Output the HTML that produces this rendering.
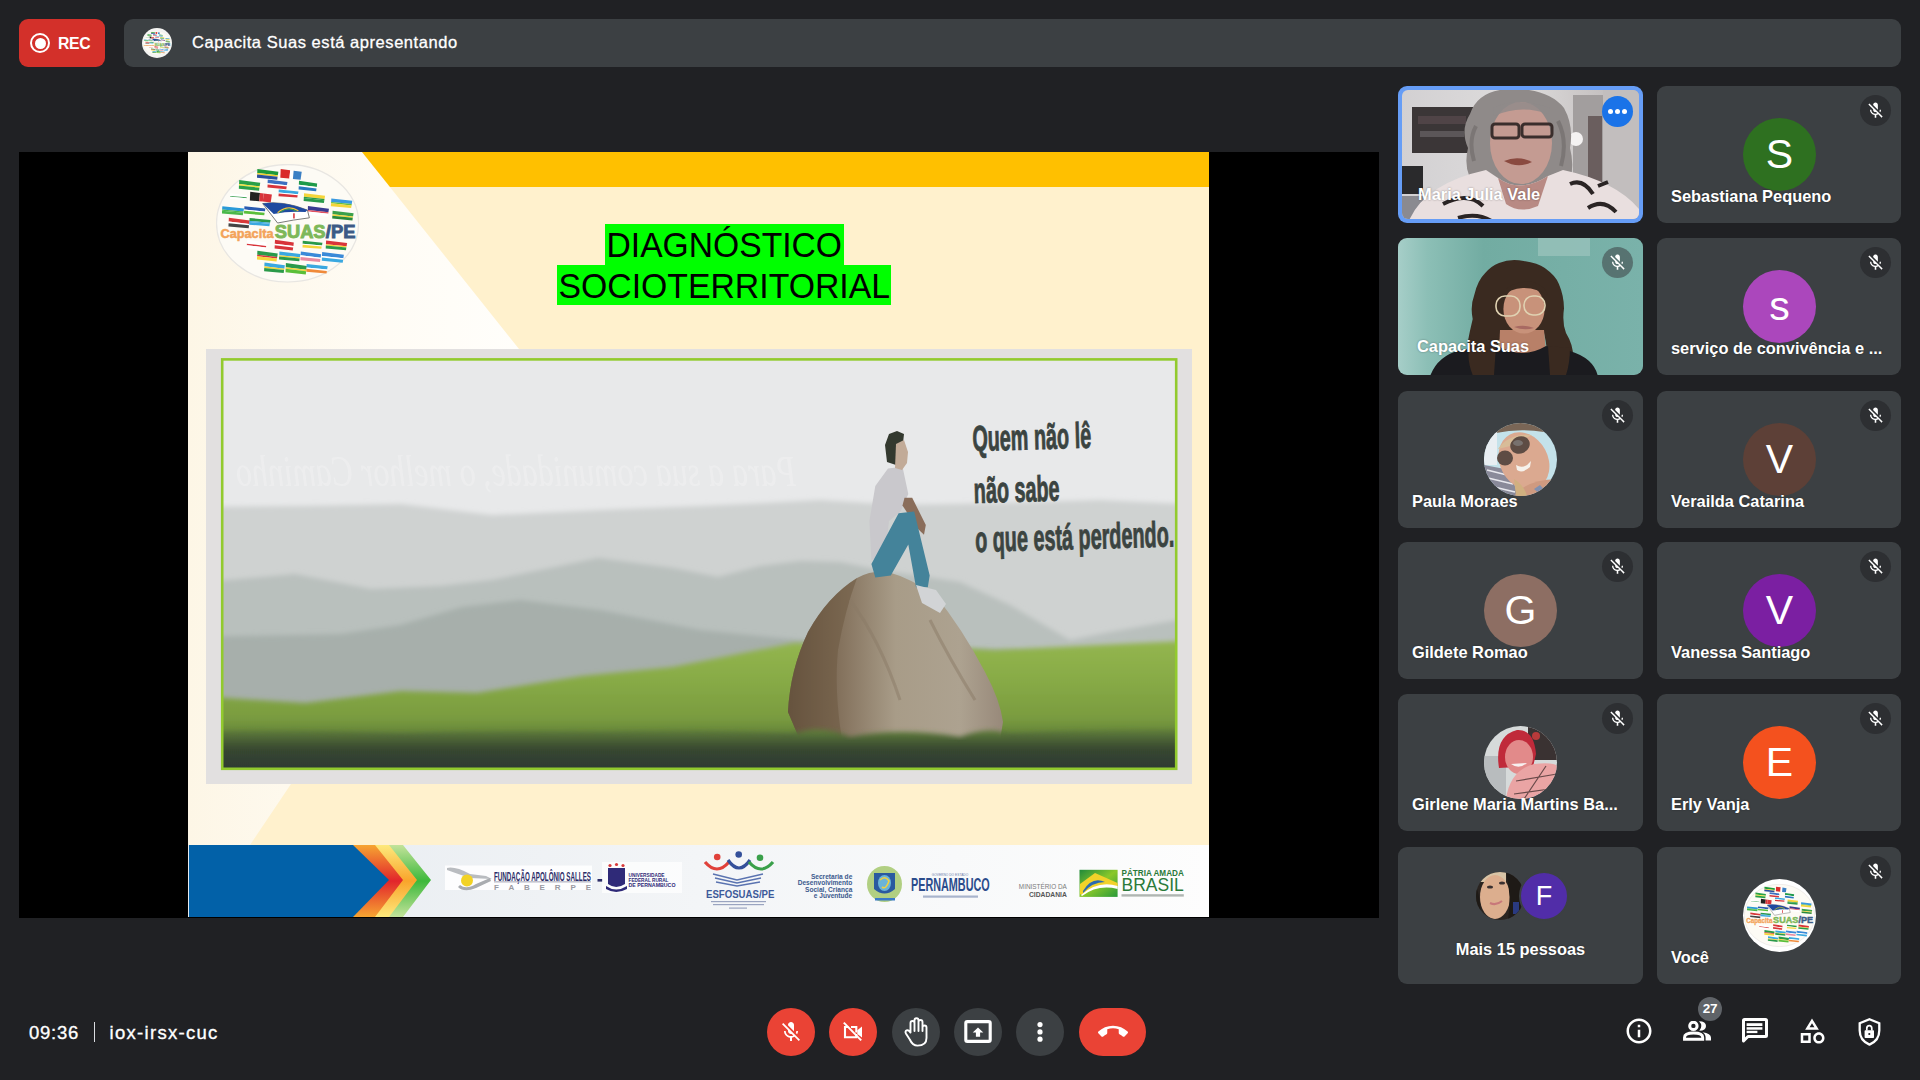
<!DOCTYPE html>
<html><head><meta charset="utf-8">
<style>
*{box-sizing:border-box;margin:0;padding:0}
html,body{width:1920px;height:1080px;overflow:hidden;background:#202124;font-family:"Liberation Sans",sans-serif;color:#fff}
.abs{position:absolute}
#rec{left:19px;top:19px;width:86px;height:48px;background:#d3302a;border-radius:9px}
#rec .ring{left:11px;top:14px;width:20px;height:20px;border:2.2px solid #fff;border-radius:50%}
#rec .dot{left:15.5px;top:18.5px;width:11px;height:11px;background:#fff;border-radius:50%}
#rec .t{left:39px;top:15.5px;font-weight:bold;font-size:15.8px;letter-spacing:-0.3px}
#bar{left:124px;top:19px;width:1777px;height:48px;background:#3c4043;border-radius:9px}
#bar .logo{left:18px;top:9px;width:30px;height:30px;border-radius:50%;background:#f4f4f2;overflow:hidden}
#bar .t{left:68px;top:14px;font-size:16.5px;letter-spacing:0.55px;color:#fff;-webkit-text-stroke:0.3px #fff}
#stage{left:19px;top:152px;width:1360px;height:766px;background:#000}
#slide{left:188px;top:152px;width:1021px;height:765px;background:#fff1cf;overflow:hidden}
.tile{position:absolute;width:245px;height:137px;background:#3c4043;border-radius:9px;overflow:hidden}
.c2{left:1657px;width:244px}
.c1{left:1398px}
.name{position:absolute;left:14px;top:100.5px;font-weight:bold;font-size:16.4px;white-space:nowrap;text-shadow:0 0 2px rgba(0,0,0,.4)}
.av{position:absolute;left:86px;top:32px;width:73px;height:73px;border-radius:50%;text-align:center;line-height:73px;font-size:41px;color:#fff;overflow:hidden}
.mute{position:absolute;right:10px;top:9px;width:31px;height:31px;border-radius:50%;background:rgba(32,33,36,.55)}
.mute svg{position:absolute;left:6px;top:6px;width:19px;height:19px}
.btn{position:absolute;top:1008px;width:48px;height:48px;border-radius:50%;background:#3c4043}
.btn.red{background:#ea4335}
.btn svg{position:absolute;left:12px;top:12px;width:24px;height:24px}
.ricon{position:absolute;top:1018px;width:24px;height:24px}
.dots{position:absolute;left:204px;top:10px;width:31px;height:31px;border-radius:50%;background:#1a73e8}
.dots i{position:absolute;top:13px;width:5.4px;height:5.4px;border-radius:50%;background:#fff}
.dots i:nth-child(1){left:5.5px}.dots i:nth-child(2){left:12.8px}.dots i:nth-child(3){left:20px}
</style></head><body>
<svg width="0" height="0" style="position:absolute"><defs><symbol id="logoSym" viewBox="85 70 1105 915" preserveAspectRatio="none"><ellipse cx="637" cy="527" rx="548" ry="453" fill="#fdfbf5" stroke="#e8e6e2" stroke-width="10"/><polygon points="404,109 566,130 562,157 403,139" fill="#1e9a3a"/>
<polygon points="403,139 562,157 560,168 402,151" fill="#f2d02a"/>
<polygon points="402,151 560,168 557,191 401,176" fill="#2c4f9c"/>
<polygon points="584,109 657,119 651,182 581,176" fill="#d92b2b"/>
<polygon points="657,119 684,122 678,185 651,182" fill="#ffffff"/>
<polygon points="684,122 746,130 737,191 678,185" fill="#3b7fc4"/>
<polygon points="264,194 426,215 422,242 263,224" fill="#2aa048"/>
<polygon points="263,224 422,242 420,253 262,236" fill="#f5e23a"/>
<polygon points="262,236 420,253 417,276 261,261" fill="#2aa048"/>
<polygon points="484,190 636,209 632,234 483,218" fill="#3c6fc0"/>
<polygon points="483,218 632,234 630,244 483,228" fill="#ffffff"/>
<polygon points="483,228 630,244 627,265 482,251" fill="#d8343a"/>
<polygon points="725,199 865,220 862,247 724,229" fill="#1f9a4a"/>
<polygon points="724,229 862,247 860,258 723,241" fill="#ffffff"/>
<polygon points="723,241 860,258 857,281 722,266" fill="#2a78c0"/>
<polygon points="195,296 325,310 322,327 194,316" fill="#ffffff"/>
<polygon points="194,316 322,327 320,334 194,323" fill="#3aa052"/>
<polygon points="194,323 320,334 318,349 193,339" fill="#ffffff"/>
<polygon points="349,284 424,294 418,357 346,351" fill="#222222"/>
<polygon points="424,294 453,297 446,360 418,357" fill="#d8343a"/>
<polygon points="453,297 516,305 507,366 446,360" fill="#d8343a"/>
<polygon points="569,266 721,282 717,303 568,289" fill="#3aa8e0"/>
<polygon points="568,289 717,303 715,311 568,298" fill="#ffffff"/>
<polygon points="568,298 715,311 712,329 567,318" fill="#d8343a"/>
<polygon points="764,295 926,314 922,339 763,323" fill="#f5d53a"/>
<polygon points="763,323 922,339 920,349 762,333" fill="#2a9a4a"/>
<polygon points="762,333 920,349 917,370 761,356" fill="#2a9a4a"/>
<polygon points="974,335 1136,354 1132,379 973,363" fill="#3a9ae0"/>
<polygon points="973,363 1132,379 1130,389 972,373" fill="#6abf3a"/>
<polygon points="972,373 1130,389 1127,410 971,396" fill="#f5d53a"/>
<polygon points="134,395 301,413 297,436 132,421" fill="#2a9ad8"/>
<polygon points="132,421 297,436 295,445 132,430" fill="#4ab84a"/>
<polygon points="132,430 295,445 292,465 131,452" fill="#4ab84a"/>
<polygon points="304,395 466,413 462,436 303,421" fill="#2a5ab0"/>
<polygon points="303,421 462,436 460,445 302,430" fill="#ffffff"/>
<polygon points="302,430 460,445 457,465 301,452" fill="#5abf3a"/>
<polygon points="794,394 956,415 952,442 793,424" fill="#3a3a90"/>
<polygon points="793,424 952,442 950,453 792,436" fill="#e05060"/>
<polygon points="792,436 950,453 947,476 791,461" fill="#ffffff"/>
<polygon points="984,430 1146,449 1142,474 983,458" fill="#3aa04a"/>
<polygon points="983,458 1142,474 1140,484 982,468" fill="#f5d53a"/>
<polygon points="982,468 1140,484 1137,505 981,491" fill="#2a8a3a"/>
<polygon points="184,484 346,505 342,532 183,514" fill="#d83a3a"/>
<polygon points="183,514 342,532 340,543 182,526" fill="#ffffff"/>
<polygon points="182,526 340,543 337,566 181,551" fill="#444444"/>
<polygon points="344,486 506,502 502,523 343,509" fill="#2a9a4a"/>
<polygon points="343,509 502,523 500,531 342,518" fill="#3aa8e0"/>
<polygon points="342,518 500,531 497,549 341,538" fill="#3aa8e0"/>
<polygon points="324,654 476,675 472,702 323,684" fill="#ffffff"/>
<polygon points="323,684 472,702 470,713 323,696" fill="#d8343a"/>
<polygon points="323,696 470,713 467,736 322,721" fill="#ffffff"/>
<polygon points="540,654 685,675 682,702 538,684" fill="#d8343a"/>
<polygon points="538,684 682,702 680,713 538,696" fill="#ffffff"/>
<polygon points="538,696 680,713 677,736 537,721" fill="#d8343a"/>
<polygon points="754,661 906,677 902,698 753,684" fill="#2a9a4a"/>
<polygon points="753,684 902,698 900,706 753,693" fill="#ffffff"/>
<polygon points="753,693 900,706 897,724 752,713" fill="#f5d53a"/>
<polygon points="934,660 1096,679 1092,704 933,688" fill="#d8343a"/>
<polygon points="933,688 1092,704 1090,714 932,698" fill="#f5d53a"/>
<polygon points="932,698 1090,714 1087,735 931,721" fill="#2a9a4a"/>
<polygon points="404,739 561,760 557,787 403,769" fill="#2a9a4a"/>
<polygon points="403,769 557,787 555,798 402,781" fill="#d8343a"/>
<polygon points="402,781 555,798 552,821 401,806" fill="#f5d53a"/>
<polygon points="574,745 736,764 732,789 573,773" fill="#3aa8e0"/>
<polygon points="573,773 732,789 730,799 572,783" fill="#f5d53a"/>
<polygon points="572,783 730,799 727,820 571,806" fill="#2a9a4a"/>
<polygon points="739,744 896,765 892,792 738,774" fill="#3a8ad8"/>
<polygon points="738,774 892,792 890,803 737,786" fill="#ffffff"/>
<polygon points="737,786 890,803 887,826 736,811" fill="#e88aa0"/>
<polygon points="904,749 1071,770 1067,797 902,779" fill="#3a8ad8"/>
<polygon points="902,779 1067,797 1065,808 902,791" fill="#ffffff"/>
<polygon points="902,791 1065,808 1062,831 901,816" fill="#3aa8e0"/>
<polygon points="459,829 616,850 612,877 458,859" fill="#3aa8e0"/>
<polygon points="458,859 612,877 610,888 457,871" fill="#f5d53a"/>
<polygon points="457,871 610,888 607,911 456,896" fill="#2a9a4a"/>
<polygon points="624,834 786,856 782,886 623,866" fill="#2a9a4a"/>
<polygon points="623,866 782,886 780,896 622,878" fill="#f5d53a"/>
<polygon points="622,878 780,896 777,921 621,905" fill="#5abf3a"/>
<polygon points="784,840 946,859 942,884 783,868" fill="#3aa8e0"/>
<polygon points="783,868 942,884 940,894 782,878" fill="#ffffff"/>
<polygon points="782,878 940,894 937,915 781,901" fill="#f08a3a"/>
<path d="M445,375 Q600,350 790,425 L805,485 Q680,500 560,525 Z" fill="#ffffff" stroke="#555" stroke-width="6"/>
<path d="M445,375 Q600,350 790,425 L775,440 Q650,430 530,455 Z" fill="#1f4aa0"/>
<path d="M560,445 Q640,380 720,430" fill="none" stroke="#f5c53a" stroke-width="10"/>
<path d="M575,445 Q640,395 705,435" fill="none" stroke="#3aa04a" stroke-width="8"/>
<rect x="680" y="450" width="12" height="40" fill="#d8343a"/>
<text x="120" y="640" font-family="Liberation Sans" font-weight="bold" font-size="95" fill="#f3a35a" stroke="#f3a35a" stroke-width="4" textLength="408" lengthAdjust="spacingAndGlyphs">Capacita</text>
<text x="538" y="640" font-family="Liberation Sans" font-weight="bold" font-size="138" fill="#7eb85a" stroke="#7eb85a" stroke-width="7" textLength="392" lengthAdjust="spacingAndGlyphs">SUAS</text>
<text x="932" y="640" font-family="Liberation Sans" font-weight="bold" font-size="138" fill="#3c5a86" stroke="#3c5a86" stroke-width="7" textLength="228" lengthAdjust="spacingAndGlyphs">/PE</text></symbol></defs></svg>
<div id="rec" class="abs"><div class="abs ring"></div><div class="abs dot"></div><div class="abs t">REC</div></div>
<div id="bar" class="abs"><div class="abs logo"><svg width="30" height="30" style="position:absolute;left:0;top:0"><use href="#logoSym" x="1" y="3" width="28" height="24"/></svg></div><div class="abs t">Capacita Suas está apresentando</div></div>
<div id="stage" class="abs"></div>
<div id="slide" class="abs"><svg width="1021" height="765" viewBox="188 152 1021 765">
<defs>
<linearGradient id="gWhite" x1="0" x2="1" y1="0" y2="0"><stop offset="0" stop-color="#fdf6e6"/><stop offset="0.6" stop-color="#fffcf5"/><stop offset="1" stop-color="#fffefb"/></linearGradient>
<linearGradient id="gSky" x1="0" x2="0" y1="0" y2="1"><stop offset="0" stop-color="#e4e6e7"/><stop offset="1" stop-color="#dcdfe0"/></linearGradient>
<linearGradient id="gFar" x1="0" x2="0" y1="0" y2="1"><stop offset="0" stop-color="#cbcecd"/><stop offset="1" stop-color="#bfc4c2"/></linearGradient>
<linearGradient id="gMid" x1="0" x2="0" y1="0" y2="1"><stop offset="0" stop-color="#b0b7b3"/><stop offset="1" stop-color="#9aa49e"/></linearGradient>
<linearGradient id="gGrass" x1="0" x2="0" y1="640" y2="769" gradientUnits="userSpaceOnUse"><stop offset="0" stop-color="#94b650"/><stop offset="0.3" stop-color="#88ab46"/><stop offset="0.6" stop-color="#7a9c40"/><stop offset="0.7" stop-color="#6a8a3a"/><stop offset="0.78" stop-color="#46593a"/><stop offset="0.88" stop-color="#34432f"/><stop offset="1" stop-color="#2f3c33"/></linearGradient>
<linearGradient id="gRock" x1="0" x2="1" y1="0" y2="0"><stop offset="0" stop-color="#5e4c3a"/><stop offset="0.25" stop-color="#85735e"/><stop offset="0.5" stop-color="#a89c88"/><stop offset="0.8" stop-color="#ada290"/><stop offset="1" stop-color="#98897a"/></linearGradient>
<linearGradient id="gDark" x1="0" x2="0" y1="727" y2="769" gradientUnits="userSpaceOnUse"><stop offset="0" stop-color="#6a8c3c"/><stop offset="0.3" stop-color="#4a6036"/><stop offset="0.55" stop-color="#36462f"/><stop offset="1" stop-color="#2e3b32"/></linearGradient>
<linearGradient id="gFoot" x1="0" x2="1" y1="0" y2="0"><stop offset="0" stop-color="#e6ebf0"/><stop offset="0.5" stop-color="#f3f5f7"/><stop offset="1" stop-color="#fdfdfd"/></linearGradient>
<linearGradient id="gB1" x1="0" x2="0" y1="845" y2="917" gradientUnits="userSpaceOnUse"><stop offset="0" stop-color="#f6a532"/><stop offset="0.5" stop-color="#e2252b"/><stop offset="1" stop-color="#f6a532"/></linearGradient>
<linearGradient id="gB2" x1="0" x2="0" y1="845" y2="917" gradientUnits="userSpaceOnUse"><stop offset="0" stop-color="#fde97c"/><stop offset="0.5" stop-color="#f9a42b"/><stop offset="1" stop-color="#fde97c"/></linearGradient>
<linearGradient id="gB3" x1="0" x2="0" y1="845" y2="917" gradientUnits="userSpaceOnUse"><stop offset="0" stop-color="#c3e39a"/><stop offset="0.5" stop-color="#3db83b"/><stop offset="1" stop-color="#c3e39a"/></linearGradient>
<filter id="soft" x="-5%" y="-5%" width="110%" height="110%"><feGaussianBlur stdDeviation="2.4"/></filter>
<clipPath id="cPhoto"><rect x="223" y="359" width="953" height="410"/></clipPath>
</defs>
<rect x="188" y="152" width="1021" height="765" fill="#fff1cd"/>
<polygon points="188,152 362,152 519,349 519,784 291,784 250,845 188,845" fill="url(#gWhite)"/>
<polygon points="362,152 1209,152 1209,187 390,187" fill="#ffc000"/>
<!-- title -->
<rect x="605" y="224" width="239" height="41" fill="#00ff00"/>
<rect x="557" y="265" width="334" height="40" fill="#00ff00"/>
<text x="606.5" y="257" font-family="Liberation Sans" font-size="35.2" fill="#000" textLength="235.5" lengthAdjust="spacingAndGlyphs">DIAGNÓSTICO</text>
<text x="558.5" y="298" font-family="Liberation Sans" font-size="35.2" fill="#000" textLength="331.5" lengthAdjust="spacingAndGlyphs">SOCIOTERRITORIAL</text>
<!-- LOGO -->
<use href="#logoSym" x="216" y="164" width="143.3" height="118.7"/>
<!-- image frame -->
<rect x="206" y="349" width="986" height="435" fill="#e2e0e0"/>
<g clip-path="url(#cPhoto)">
<rect x="223" y="359" width="953" height="409" fill="#e8e9ea"/>
<g transform="translate(1032,0) scale(-1,1)" opacity="0.22"><text x="236" y="486" font-family="Liberation Serif" font-style="italic" font-size="44" fill="#ffffff" textLength="560" lengthAdjust="spacingAndGlyphs">Para a sua comunidade, o melhor Caminho</text></g>
<path filter="url(#soft)" d="M195,507 L300,506 L401,504 L450,510 L492,515 L600,510 L700,506 L764,503 L820,500 L900,505 L1000,503 L1100,500 L1205,505 L1205,800 L195,800Z" fill="#cfd2d1"/>
<path filter="url(#soft)" d="M195,583 L295,574 L371,589 L440,586 L492,580 L560,566 L598,558 L673,568 L718,577 L760,566 L800,561 L840,562 L880,570 L960,582 L1010,605 L1070,640 L1110,632 L1205,615 L1205,800 L195,800Z" fill="#b9c0bd"/>
<path filter="url(#soft)" d="M195,637 L341,634 L400,625 L462,607 L520,600 L600,610 L700,630 L800,640 L1205,660 L1205,800 L195,800Z" fill="#a3ada8" fill-opacity="0.85"/>
<path filter="url(#soft)" d="M195,696 L305,703 L401,691 L477,693 L582,676 L673,667 L794,643 L900,645 L995,650 L1100,645 L1205,640 L1205,800 L195,800Z" fill="url(#gGrass)"/>
<path d="M788,712 Q790,670 808,632 Q828,596 857,578 Q872,570 888,572 Q910,578 935,595 Q962,628 985,672 Q1000,700 1003,722 L1000,740 L800,740Z" fill="url(#gRock)"/>
<path d="M788,712 Q790,670 808,632 Q828,596 857,578 Q845,610 838,650 Q834,690 842,740 L800,740Z" fill="#6e5a42" fill-opacity="0.55"/>
<path d="M850,600 Q880,640 900,700 M930,620 Q950,660 975,700" stroke="#8a7a66" stroke-width="3" fill="none" opacity=".5"/>
<path filter="url(#soft)" d="M195,733 Q300,729 400,735 Q500,731 600,733 Q700,729 790,735 Q820,723 850,737 Q900,727 960,737 Q990,725 1010,735 Q1100,729 1205,731 L1205,800 L195,800Z" fill="url(#gDark)"/>
<!-- man -->
<path d="M888,468.6 L902.5,466.7 L908.3,494 L900.6,511.4 L889,521 L885,556 L871.4,560 L869.4,521 L875.3,486Z" fill="#c9c8cc"/>
<path d="M904.5,497.8 L912.2,497.8 L925.8,525 L924,534.7 L918,529 L902.5,505.6Z" fill="#8a6d5a"/>
<path d="M871.4,564 L898.6,513.3 L914.2,511.4 L929.7,575.6 L927.8,587.3 L916,587.3 L908.3,544.5 L890.8,575.6 L875.3,577.5Z" fill="#44839a"/>
<path d="M887,462 L885,445 L889,434 L897,431 L904,434 L903,443 L897,448 L896,465Z" fill="#33392f"/>
<path d="M896,444 L904,440 L908,452 L907,463 L902,470 L895,468Z" fill="#c2ab98"/>
<path d="M916,585 L936,590 L946,604 L940,613 L922,603Z" fill="#d2d4d6"/>
</g>
<rect x="222.2" y="359.4" width="954" height="409.4" fill="none" stroke="#92ca2e" stroke-width="2.6"/>
<g transform="rotate(-1.6 972 500)"><g font-family="Liberation Sans" font-weight="bold" font-size="36" fill="#3b4441" stroke="#3b4441" stroke-width="0.9" transform="translate(974,0) scale(0.55,1) translate(-974,0)">
<text x="974" y="451">Quem não lê</text>
<text x="974" y="503">não sabe</text>
<text x="974" y="552">o que está perdendo.</text>
</g></g>
<!-- footer -->
<rect x="188" y="845" width="1021" height="72" fill="url(#gFoot)"/>
<polygon points="403,845 431,880 403,917 375,917 403,880 375,845" fill="url(#gB3)"/>
<polygon points="389,845 417,880 389,917 361,917 389,880 361,845" fill="url(#gB2)"/>
<polygon points="375,845 403,880 375,917 347,917 375,880 347,845" fill="url(#gB1)"/>
<polygon points="189,845 353,845 389,880 353,917 189,917" fill="#0261a8"/>
<g id="footlogos">
<rect x="445" y="865.5" width="147" height="24.5" fill="#ffffff" fill-opacity="0.85"/>
<path d="M447,868 Q455,866 470,874 L486,876 L492,879 L470,878 Q458,874 447,870Z" fill="#b9bcc0"/>
<circle cx="467" cy="880.5" r="6" fill="#f2d225"/>
<path d="M460,885 Q466,890 476,884 L490,878 L491,881 L476,888 Q464,893 458,887Z" fill="#a9acb0"/>
<text x="494" y="880.5" font-family="Liberation Sans" font-weight="bold" font-size="13" fill="#2c2d68" textLength="97" lengthAdjust="spacingAndGlyphs">FUNDAÇÃO APOLÔNIO SALLES</text>
<rect x="494" y="881.5" width="97" height="0.8" fill="#8a8aa0"/>
<text x="494" y="890" font-family="Liberation Sans" font-weight="bold" font-size="8" fill="#9a9aa2" textLength="97" lengthAdjust="spacing">F A B E R P E</text>
<rect x="597.5" y="879" width="5" height="2.6" fill="#2c2d68"/>
<rect x="602" y="862" width="80" height="31" fill="#ffffff" fill-opacity="0.7"/>
<path d="M608,868 L625,868 L625,884 Q616,890 608,884Z" fill="#2f2a78"/>
<circle cx="610" cy="865.5" r="1.6" fill="#d83a3a"/><circle cx="616.5" cy="864.5" r="1.6" fill="#d83a3a"/><circle cx="623" cy="865.5" r="1.6" fill="#d83a3a"/>
<path d="M606,886 Q616,893 627,886 L627,889 Q616,895 606,889Z" fill="#2f2a78"/>
<g font-family="Liberation Sans" font-weight="bold" font-size="5.2" fill="#2f2a78">
<text x="628.5" y="876.5" textLength="36" lengthAdjust="spacingAndGlyphs">UNIVERSIDADE</text>
<text x="628.5" y="881.8" textLength="40" lengthAdjust="spacingAndGlyphs">FEDERAL RURAL</text>
<text x="628.5" y="887" textLength="47" lengthAdjust="spacingAndGlyphs">DE PERNAMBUCO</text>
</g>
<!-- ESFOSUAS -->
<circle cx="717.2" cy="857" r="3.3" fill="#e0413a"/>
<circle cx="738.7" cy="854.5" r="3.3" fill="#34509a"/>
<circle cx="760" cy="857.7" r="3.3" fill="#3aa04a"/>
<path d="M705,862 Q717,876 729,862" fill="none" stroke="#e0413a" stroke-width="3.2"/>
<path d="M728,860 Q739,876 750,860" fill="none" stroke="#34509a" stroke-width="3.2"/>
<path d="M749,862 Q761,876 773,862" fill="none" stroke="#3aa04a" stroke-width="3.2"/>
<path d="M713,874 L737,880 L763,874 M715,878 L737,883 L761,878 M716,882 L737,886 L760,882" fill="none" stroke="#5a73b0" stroke-width="1.3"/>
<text x="706" y="898.2" font-family="Liberation Sans" font-weight="bold" font-size="11" fill="#3d5a9a" textLength="68.4" lengthAdjust="spacingAndGlyphs">ESFOSUAS/PE</text>
<rect x="711" y="901" width="55" height="1.2" fill="#9aa4c0"/><rect x="713" y="904" width="51" height="1.2" fill="#9aa4c0"/><rect x="729" y="907.5" width="18" height="1.2" fill="#9aa4c0"/>
<!-- Secretaria -->
<g font-family="Liberation Sans" font-weight="bold" font-size="6.6" fill="#3c5a8e" text-anchor="end">
<text x="852.3" y="878.5">Secretaria de</text>
<text x="852.3" y="885">Desenvolvimento</text>
<text x="852.3" y="891.5">Social, Criança</text>
<text x="852.3" y="898">e Juventude</text>
</g>
<!-- PE seal -->
<ellipse cx="884.5" cy="884" rx="17.5" ry="18" fill="#9ac25a" fill-opacity="0.75"/>
<path d="M874,873 L895,873 L895,889 Q884.5,898 874,889Z" fill="#2a5aa0"/>
<ellipse cx="884.5" cy="883" rx="6.5" ry="8" fill="#6ab4d8"/>
<path d="M880,880 Q885,875 889,881 Q886,890 882,887" fill="none" stroke="#f0d040" stroke-width="1.6"/>
<rect x="875" y="898" width="20" height="2.5" fill="#3a7ac8"/>
<text x="931.7" y="876.2" font-family="Liberation Sans" font-size="3.2" fill="#6a80aa" textLength="36.5" lengthAdjust="spacing">GOVERNO DO ESTADO</text>
<text x="911" y="891" font-family="Liberation Sans" font-weight="bold" font-size="19" fill="#2b4c8c" textLength="78.7" lengthAdjust="spacingAndGlyphs">PERNAMBUCO</text>
<rect x="923" y="895.5" width="55" height="2.2" fill="#a8b4cc"/>
<!-- Ministerio -->
<text x="1066.8" y="889.2" font-family="Liberation Sans" font-size="7.2" fill="#7a7a7a" text-anchor="end" textLength="48" lengthAdjust="spacingAndGlyphs">MINISTÉRIO DA</text>
<text x="1066.8" y="897" font-family="Liberation Sans" font-weight="bold" font-size="7.6" fill="#555555" text-anchor="end" textLength="37.8" lengthAdjust="spacingAndGlyphs">CIDADANIA</text>
<!-- Brasil -->
<defs><linearGradient id="gBr" x1="0" x2="1" y1="0" y2="1"><stop offset="0" stop-color="#1f8a3a"/><stop offset="0.5" stop-color="#8ac82a"/><stop offset="1" stop-color="#2a9a3a"/></linearGradient></defs>
<rect x="1079.5" y="869.8" width="38.1" height="27.1" fill="url(#gBr)"/>
<path d="M1080,894 L1080,884 L1095,873 L1117.6,883 L1117.6,887 Q1100,880 1082,895Z" fill="#f2d22a"/>
<path d="M1083,891 Q1092,876 1105,882 Q1092,882 1083,893Z" fill="#2a6ab0"/>
<path d="M1081,895 Q1098,880 1117.6,886 L1117.6,889 Q1098,884 1082,896Z" fill="#ffffff"/>
<text x="1121.5" y="876.3" font-family="Liberation Sans" font-weight="bold" font-size="8.6" fill="#2a7a3a" textLength="62.3" lengthAdjust="spacingAndGlyphs">PÁTRIA AMADA</text>
<text x="1121.5" y="891.4" font-family="Liberation Sans" font-size="18.5" fill="#2a7a3a" textLength="62.3" lengthAdjust="spacingAndGlyphs">BRASIL</text>
<rect x="1121.5" y="894.2" width="62.3" height="2.4" fill="#b0b6b2"/>
</g>
</svg></div>

<!-- tiles -->
<div class="tile c1" style="top:86px;background:#669df6;"><svg width="237" height="129" viewBox="4 4 237 129" style="position:absolute;left:4px;top:4px;border-radius:6px">
<defs><linearGradient id="mjW" x1="0" x2="1"><stop offset="0" stop-color="#d2d0d2"/><stop offset="0.5" stop-color="#dedcdc"/><stop offset="1" stop-color="#b9b4b4"/></linearGradient></defs>
<rect width="245" height="137" fill="url(#mjW)"/>
<rect x="14" y="21" width="61" height="46" fill="#3b3637"/>
<rect x="20" y="30" width="48" height="8" fill="#5a4a4e" opacity=".7"/>
<rect x="22" y="45" width="44" height="6" fill="#6a6466" opacity=".7"/>
<rect x="4" y="80" width="21" height="28" fill="#2a2a2c"/>
<rect x="4" y="110" width="50" height="27" fill="#8a8a90"/>
<rect x="175" y="9" width="30" height="100" fill="#a29e9e"/>
<rect x="190" y="30" width="14" height="80" fill="#6a5e5e"/>
<rect x="205" y="0" width="40" height="137" fill="#c2bebe"/>
<circle cx="178" cy="53" r="7" fill="#f4f2f2"/>
<path d="M72,28 Q80,4 112,3 Q150,2 166,22 Q176,40 172,62 Q178,85 168,104 L150,108 L80,104 Q64,86 70,62 Q62,44 72,28Z" fill="#8f8a89"/>
<path d="M78,40 Q70,55 76,75 M160,35 Q170,55 163,80" stroke="#6e6968" stroke-width="4" fill="none" opacity=".6"/>
<ellipse cx="123" cy="57" rx="31" ry="41" fill="#c49b92"/>
<path d="M95,22 Q118,10 152,22 L150,28 Q122,18 96,30Z" fill="#8f8a89" opacity=".8"/>
<rect x="94" y="38" width="27" height="14" rx="3" fill="none" stroke="#3a2e2c" stroke-width="3"/>
<rect x="124" y="38" width="30" height="13" rx="3" fill="none" stroke="#3a2e2c" stroke-width="3"/>
<path d="M106,75 Q120,69 134,76 Q120,83 106,75Z" fill="#8a4a40"/>
<path d="M10,137 Q25,98 88,84 L100,92 Q122,108 150,90 L165,84 Q222,96 245,128 L245,137Z" fill="#e9dfdf"/>
<path d="M100,92 Q122,108 150,90 L140,120 Q122,128 108,118Z" fill="#b88a84"/>
<path d="M45,118 Q70,105 85,120 M172,98 Q185,92 195,108 M190,122 Q205,112 218,126 M60,132 Q80,126 95,136 M200,100 L210,96" fill="none" stroke="#2a2424" stroke-width="4"/>
</svg><div class="name" style="left:20px;top:99px">Maria Julia Vale</div><div class="dots"><i></i><i></i><i></i></div></div>
<div class="tile c2" style="top:86px"><div class="av" style="background:#2e7020">S</div><div class="name" style="">Sebastiana Pequeno</div><div class="mute"><svg viewBox="0 0 24 24"><path fill="#fff" d="M19 11h-1.7c0 .74-.16 1.43-.43 2.05l1.23 1.23c.56-.98.9-2.09.9-3.28zm-4.02.17c0-.06.02-.11.02-.17V5c0-1.66-1.34-3-3-3S9 3.34 9 5v.18l5.98 5.99zM4.27 3L3 4.27l6.01 6.01V11c0 1.66 1.33 3 2.99 3 .22 0 .44-.03.65-.08l1.66 1.66c-.71.33-1.5.52-2.31.52-2.76 0-5.3-2.1-5.3-5.1H5c0 3.41 2.72 6.23 6 6.72V21h2v-3.28c.91-.13 1.77-.45 2.54-.9L19.73 21 21 19.73 4.27 3z"/></svg></div></div>
<div class="tile c1" style="top:238px"><svg width="245" height="137" style="position:absolute;left:0;top:0">
<defs><linearGradient id="csW" x1="0" x2="1"><stop offset="0" stop-color="#a6cec8"/><stop offset="0.12" stop-color="#8cbfb6"/><stop offset="0.35" stop-color="#72aca2"/><stop offset="1" stop-color="#7ab2aa"/></linearGradient></defs>
<rect width="245" height="137" fill="url(#csW)"/>
<rect x="140" y="0" width="52" height="18" fill="#9cc4be" opacity=".7"/>
<path d="M101,25 Q113,20 125.7,23 Q140,25 146.8,30 Q158,38 160.9,46 Q166,58 166,70.5 Q164,85 168,95 Q176,108 175,121.5 Q172,132 168,137 L150,137 Q150,110 146,95 L104,95 Q96,115 98,137 L74.7,137 Q68,120 69.4,105.7 Q72,92 74.7,81 Q72,68 76.4,56.4 Q80,42 87,35.3 Q93,28 101,25Z" fill="#3a2a20"/>
<path d="M100,137 L102,92 L146,92 L150,137Z" fill="#b88068"/>
<path d="M32.5,137 Q40,118 62,112 L100,108 Q124,122 148,108 L172,113 Q195,120 199.6,137Z" fill="#1b1b1f"/>
<path d="M74.7,137 Q68,120 72,108 L98,108 L96,137Z M168,137 Q172,125 172,110 L150,108 L152,137Z" fill="#3a2a20"/>
<ellipse cx="126" cy="71" rx="20.6" ry="24.6" fill="#c8927a"/>
<path d="M104,55 Q115,42 135,44 Q148,48 150,58 Q140,50 125,50 Q112,50 104,60Z" fill="#3a2a20"/>
<rect x="98" y="58" width="24" height="20" rx="9" fill="none" stroke="#e0d2b2" stroke-width="1.6"/>
<rect x="126" y="58" width="21" height="19" rx="9" fill="none" stroke="#e0d2b2" stroke-width="1.6"/>
<path d="M116,89 Q126,86 136,90 Q126,93 116,89Z" fill="#a86a62"/>
</svg><div class="name" style="left:19px;top:98.5px">Capacita Suas</div><div class="mute" style="background:rgba(60,64,67,.55)"><svg viewBox="0 0 24 24"><path fill="#fff" d="M19 11h-1.7c0 .74-.16 1.43-.43 2.05l1.23 1.23c.56-.98.9-2.09.9-3.28zm-4.02.17c0-.06.02-.11.02-.17V5c0-1.66-1.34-3-3-3S9 3.34 9 5v.18l5.98 5.99zM4.27 3L3 4.27l6.01 6.01V11c0 1.66 1.33 3 2.99 3 .22 0 .44-.03.65-.08l1.66 1.66c-.71.33-1.5.52-2.31.52-2.76 0-5.3-2.1-5.3-5.1H5c0 3.41 2.72 6.23 6 6.72V21h2v-3.28c.91-.13 1.77-.45 2.54-.9L19.73 21 21 19.73 4.27 3z"/></svg></div></div>
<div class="tile c2" style="top:238px"><div class="av" style="background:#ab47bc">s</div><div class="name" style="">serviço de convivência e ...</div><div class="mute"><svg viewBox="0 0 24 24"><path fill="#fff" d="M19 11h-1.7c0 .74-.16 1.43-.43 2.05l1.23 1.23c.56-.98.9-2.09.9-3.28zm-4.02.17c0-.06.02-.11.02-.17V5c0-1.66-1.34-3-3-3S9 3.34 9 5v.18l5.98 5.99zM4.27 3L3 4.27l6.01 6.01V11c0 1.66 1.33 3 2.99 3 .22 0 .44-.03.65-.08l1.66 1.66c-.71.33-1.5.52-2.31.52-2.76 0-5.3-2.1-5.3-5.1H5c0 3.41 2.72 6.23 6 6.72V21h2v-3.28c.91-.13 1.77-.45 2.54-.9L19.73 21 21 19.73 4.27 3z"/></svg></div></div>
<div class="tile c1" style="top:391px"><div class="av"><svg width="73" height="73" style="position:absolute;left:0;top:0">
<rect width="73" height="73" fill="#c4e2ea"/>
<path d="M8,0 L62,0 L60,9 Q35,5 12,10Z" fill="#7a6656"/>
<rect x="0" y="8" width="13" height="34" fill="#e8eef2"/>
<path d="M0,42 L26,47 L34,73 L0,73Z" fill="#8a8a9a"/>
<path d="M3,47 L27,53 M4,55 L29,61 M6,63 L31,69" stroke="#e8e8ee" stroke-width="1.6"/>
<ellipse cx="40" cy="38" rx="24" ry="30" transform="rotate(-28 40 38)" fill="#dba990"/>
<path d="M14,26 Q25,10 48,12 Q40,16 30,22Z" fill="#d8bc98"/>
<ellipse cx="21" cy="35" rx="8" ry="7.5" fill="#5e4c44"/>
<ellipse cx="36" cy="22" rx="10" ry="8.5" transform="rotate(-25 36 22)" fill="#5e4c44"/>
<ellipse cx="34" cy="20" rx="5" ry="3" fill="#8a8a8a" opacity=".6"/>
<path d="M32,42 Q40,47 47,38 L46,44 Q38,51 33,47Z" fill="#f6f2ec"/>
<path d="M30,73 Q42,57 73,56 L73,73Z" fill="#cf9a80"/>
<path d="M30,56 Q40,62 43,73 L32,73Z" fill="#d0b080"/>
<path d="M50,66 L58,73 L66,73 L56,62Z" fill="#8090b0"/>
</svg></div><div class="name" style="">Paula Moraes</div><div class="mute"><svg viewBox="0 0 24 24"><path fill="#fff" d="M19 11h-1.7c0 .74-.16 1.43-.43 2.05l1.23 1.23c.56-.98.9-2.09.9-3.28zm-4.02.17c0-.06.02-.11.02-.17V5c0-1.66-1.34-3-3-3S9 3.34 9 5v.18l5.98 5.99zM4.27 3L3 4.27l6.01 6.01V11c0 1.66 1.33 3 2.99 3 .22 0 .44-.03.65-.08l1.66 1.66c-.71.33-1.5.52-2.31.52-2.76 0-5.3-2.1-5.3-5.1H5c0 3.41 2.72 6.23 6 6.72V21h2v-3.28c.91-.13 1.77-.45 2.54-.9L19.73 21 21 19.73 4.27 3z"/></svg></div></div>
<div class="tile c2" style="top:391px"><div class="av" style="background:#5d4037">V</div><div class="name" style="">Verailda Catarina</div><div class="mute"><svg viewBox="0 0 24 24"><path fill="#fff" d="M19 11h-1.7c0 .74-.16 1.43-.43 2.05l1.23 1.23c.56-.98.9-2.09.9-3.28zm-4.02.17c0-.06.02-.11.02-.17V5c0-1.66-1.34-3-3-3S9 3.34 9 5v.18l5.98 5.99zM4.27 3L3 4.27l6.01 6.01V11c0 1.66 1.33 3 2.99 3 .22 0 .44-.03.65-.08l1.66 1.66c-.71.33-1.5.52-2.31.52-2.76 0-5.3-2.1-5.3-5.1H5c0 3.41 2.72 6.23 6 6.72V21h2v-3.28c.91-.13 1.77-.45 2.54-.9L19.73 21 21 19.73 4.27 3z"/></svg></div></div>
<div class="tile c1" style="top:542px"><div class="av" style="background:#8d6e63">G</div><div class="name" style="">Gildete Romao</div><div class="mute"><svg viewBox="0 0 24 24"><path fill="#fff" d="M19 11h-1.7c0 .74-.16 1.43-.43 2.05l1.23 1.23c.56-.98.9-2.09.9-3.28zm-4.02.17c0-.06.02-.11.02-.17V5c0-1.66-1.34-3-3-3S9 3.34 9 5v.18l5.98 5.99zM4.27 3L3 4.27l6.01 6.01V11c0 1.66 1.33 3 2.99 3 .22 0 .44-.03.65-.08l1.66 1.66c-.71.33-1.5.52-2.31.52-2.76 0-5.3-2.1-5.3-5.1H5c0 3.41 2.72 6.23 6 6.72V21h2v-3.28c.91-.13 1.77-.45 2.54-.9L19.73 21 21 19.73 4.27 3z"/></svg></div></div>
<div class="tile c2" style="top:542px"><div class="av" style="background:#7b1fa2">V</div><div class="name" style="">Vanessa Santiago</div><div class="mute"><svg viewBox="0 0 24 24"><path fill="#fff" d="M19 11h-1.7c0 .74-.16 1.43-.43 2.05l1.23 1.23c.56-.98.9-2.09.9-3.28zm-4.02.17c0-.06.02-.11.02-.17V5c0-1.66-1.34-3-3-3S9 3.34 9 5v.18l5.98 5.99zM4.27 3L3 4.27l6.01 6.01V11c0 1.66 1.33 3 2.99 3 .22 0 .44-.03.65-.08l1.66 1.66c-.71.33-1.5.52-2.31.52-2.76 0-5.3-2.1-5.3-5.1H5c0 3.41 2.72 6.23 6 6.72V21h2v-3.28c.91-.13 1.77-.45 2.54-.9L19.73 21 21 19.73 4.27 3z"/></svg></div></div>
<div class="tile c1" style="top:694px"><div class="av"><svg width="73" height="73" style="position:absolute;left:0;top:0">
<rect width="73" height="73" fill="#d6dada"/>
<rect x="0" y="30" width="22" height="43" fill="#b8bcbe"/>
<rect x="44" y="0" width="29" height="34" fill="#3a3232"/>
<circle cx="52" cy="10" r="4" fill="#b83a3a"/>
<path d="M15,42 Q10,10 33,4 Q50,3 52,28 L48,45 Q30,40 15,42Z" fill="#c02a3a"/>
<ellipse cx="35" cy="31" rx="14" ry="17" fill="#e28a8a"/>
<path d="M27,38 Q35,44 43,37" fill="#f8f0f0"/>
<path d="M22,73 Q26,44 50,38 Q70,36 73,40 L73,73Z" fill="#eaa4a4"/>
<path d="M40,73 L62,40 M55,73 L73,50 M32,55 L73,48 M30,68 L73,62" stroke="#6a4a4a" stroke-width="1.2" fill="none"/>
</svg></div><div class="name" style="">Girlene Maria Martins Ba...</div><div class="mute"><svg viewBox="0 0 24 24"><path fill="#fff" d="M19 11h-1.7c0 .74-.16 1.43-.43 2.05l1.23 1.23c.56-.98.9-2.09.9-3.28zm-4.02.17c0-.06.02-.11.02-.17V5c0-1.66-1.34-3-3-3S9 3.34 9 5v.18l5.98 5.99zM4.27 3L3 4.27l6.01 6.01V11c0 1.66 1.33 3 2.99 3 .22 0 .44-.03.65-.08l1.66 1.66c-.71.33-1.5.52-2.31.52-2.76 0-5.3-2.1-5.3-5.1H5c0 3.41 2.72 6.23 6 6.72V21h2v-3.28c.91-.13 1.77-.45 2.54-.9L19.73 21 21 19.73 4.27 3z"/></svg></div></div>
<div class="tile c2" style="top:694px"><div class="av" style="background:#f4511e">E</div><div class="name" style="">Erly Vanja</div><div class="mute"><svg viewBox="0 0 24 24"><path fill="#fff" d="M19 11h-1.7c0 .74-.16 1.43-.43 2.05l1.23 1.23c.56-.98.9-2.09.9-3.28zm-4.02.17c0-.06.02-.11.02-.17V5c0-1.66-1.34-3-3-3S9 3.34 9 5v.18l5.98 5.99zM4.27 3L3 4.27l6.01 6.01V11c0 1.66 1.33 3 2.99 3 .22 0 .44-.03.65-.08l1.66 1.66c-.71.33-1.5.52-2.31.52-2.76 0-5.3-2.1-5.3-5.1H5c0 3.41 2.72 6.23 6 6.72V21h2v-3.28c.91-.13 1.77-.45 2.54-.9L19.73 21 21 19.73 4.27 3z"/></svg></div></div>
<div class="tile c1" style="top:847px"><div class="av" style="left:78px;top:25px;width:48px;height:48px"><svg width="48" height="48" style="position:absolute;left:0;top:0">
<rect width="48" height="48" fill="#2a2420"/>
<rect x="4" y="0" width="26" height="10" fill="#d8c4a6"/>
<ellipse cx="19" cy="25" rx="15" ry="22" fill="#dcae8e"/>
<path d="M30,0 L48,0 L48,48 L32,48 Q36,25 30,0Z" fill="#1e1a16"/>
<path d="M0,14 Q6,30 4,48 L0,48Z" fill="#1e1a16"/>
<ellipse cx="14" cy="15" rx="3" ry="1.6" fill="#3a3030"/><ellipse cx="26" cy="11" rx="3" ry="1.6" fill="#3a3030"/>
<path d="M14,31 Q20,34 26,29" stroke="#c8787a" stroke-width="2" fill="none"/>
<rect x="37" y="30" width="6" height="12" fill="#2a3a80"/>
</svg></div><div class="av" style="left:121px;top:24px;width:50px;height:50px;border:2px solid #3c4043;background:#512da8;line-height:46px;font-size:27px">F</div><div class="name" style="left:0;width:245px;text-align:center;top:940px;top:93px">Mais 15 pessoas</div></div>
<div class="tile c2" style="top:847px"><div class="av" style="background:#fff"><svg width="73" height="73" style="position:absolute;left:0;top:0"><use href="#logoSym" x="1" y="5" width="71" height="63"/></svg></div><div class="name" style="">Você</div><div class="mute"><svg viewBox="0 0 24 24"><path fill="#fff" d="M19 11h-1.7c0 .74-.16 1.43-.43 2.05l1.23 1.23c.56-.98.9-2.09.9-3.28zm-4.02.17c0-.06.02-.11.02-.17V5c0-1.66-1.34-3-3-3S9 3.34 9 5v.18l5.98 5.99zM4.27 3L3 4.27l6.01 6.01V11c0 1.66 1.33 3 2.99 3 .22 0 .44-.03.65-.08l1.66 1.66c-.71.33-1.5.52-2.31.52-2.76 0-5.3-2.1-5.3-5.1H5c0 3.41 2.72 6.23 6 6.72V21h2v-3.28c.91-.13 1.77-.45 2.54-.9L19.73 21 21 19.73 4.27 3z"/></svg></div></div>
<!-- bottom -->
<div class="abs" style="left:29px;top:1022px;font-size:18.5px;letter-spacing:0.75px;-webkit-text-stroke:0.35px #fff">09:36</div>
<div class="abs" style="left:94px;top:1022px;width:1.3px;height:19.5px;background:#dadce0"></div>
<div class="abs" style="left:109.5px;top:1022px;font-size:18.5px;letter-spacing:1.3px;-webkit-text-stroke:0.35px #fff">iox-irsx-cuc</div>

<div class="btn red" style="left:767px"><svg viewBox="0 0 24 24"><path fill="#fff" d="M19 11h-1.7c0 .74-.16 1.43-.43 2.05l1.23 1.23c.56-.98.9-2.09.9-3.28zm-4.02.17c0-.06.02-.11.02-.17V5c0-1.66-1.34-3-3-3S9 3.34 9 5v.18l5.98 5.99zM4.27 3L3 4.27l6.01 6.01V11c0 1.66 1.33 3 2.99 3 .22 0 .44-.03.65-.08l1.66 1.66c-.71.33-1.5.52-2.310.52-2.76 0-5.3-2.1-5.3-5.1H5c0 3.41 2.72 6.23 6 6.72V21h2v-3.28c.91-.13 1.770-.45 2.54-.9L19.73 21 21 19.73 4.27 3z"/></svg></div>
<div class="btn red" style="left:829px"><svg viewBox="0 0 24 24"><path fill="none" stroke="#fff" stroke-width="2.1" d="M7.5,7 H4 V17.3 H15.3 V14 M10,7 H15.3 V12.5"/><path fill="#fff" d="M16.3,10.2 L21,6.6 V17.6 L16.3,14Z"/><path stroke="#fff" stroke-width="2" d="M2.8,2.6 L20.2,20.4"/></svg></div>
<div class="btn" style="left:892px"><svg viewBox="0 0 48 48" style="left:0;top:0;width:48px;height:48px"><path fill="none" stroke="#fff" stroke-width="1.9" stroke-linejoin="round" d="M17.8,31.5 L13.9,25.4 Q12.8,23.3 14.6,22.4 Q16.3,21.6 17.6,23.4 L18.5,24.6 V15 Q18.5,13 20.5,13 Q22.5,13 22.5,15 V23 V12.2 Q22.5,10.2 24.5,10.2 Q26.5,10.2 26.5,12.2 V23 V14 Q26.5,12 28.5,12 Q30.5,12 30.5,14 V23 V19.5 Q30.5,17.5 32.5,17.5 Q34.5,17.5 34.5,19.5 V30 Q34.5,37.6 25.5,37.6 Q20.5,37.6 17.8,31.5Z"/></svg></div>
<div class="btn" style="left:954px"><svg viewBox="0 0 30 30" style="left:9px;top:9px;width:30px;height:30px"><rect x="2.8" y="4.6" width="24.4" height="19.8" rx="1.5" fill="none" stroke="#fff" stroke-width="3.1"/><path fill="#fff" d="M15,10.4 L20.3,15.4 H17.1 V19.8 H12.9 V15.4 H9.7Z"/></svg></div>
<div class="btn" style="left:1016px"><svg viewBox="0 0 24 24"><circle cx="12" cy="4.6" r="2.6" fill="#fff"/><circle cx="12" cy="11.9" r="2.6" fill="#fff"/><circle cx="12" cy="19.2" r="2.6" fill="#fff"/></svg></div>
<div class="btn red" style="left:1079px;width:67px;border-radius:24px"><svg viewBox="0 0 24 24" style="left:19px;top:8.5px;width:30px;height:30px"><path fill="#fff" d="M12 9c-1.6 0-3.15.25-4.6.72v3.1c0 .39-.23.74-.56.9-.98.49-1.87 1.12-2.66 1.85-.18.18-.43.28-.7.28-.28 0-.53-.11-.71-.29L.29 13.08c-.18-.17-.29-.42-.29-.7 0-.28.11-.53.29-.71C3.34 8.78 7.46 7 12 7s8.66 1.78 11.71 4.67c.18.18.29.43.29.71 0 .28-.11.53-.29.71l-2.48 2.48c-.18.18-.43.29-.71.29-.27 0-.52-.11-.7-.28-.79-.74-1.69-1.36-2.67-1.85-.33-.16-.56-.5-.56-.9v-3.1C15.150 9.25 13.6 9 12 9z"/></svg></div>

<!-- right icons -->
<svg class="ricon" viewBox="0 0 24 24" style="left:1624px;top:1015.5px;width:30px;height:30px"><path fill="#fff" d="M11 7h2v2h-2zm0 4h2v6h-2zm1-9C6.48 2 2 6.48 2 12s4.48 10 10 10 10-4.48 10-10S17.52 2 12 2zm0 18c-4.41 0-8-3.590-8-8s3.59-8 8-8 8 3.59 8 8-3.59 8-8 8z"/></svg>
<svg class="ricon" viewBox="0 0 28 20" style="left:1683px;top:1021px;width:28px;height:20px"><circle cx="10.4" cy="4.9" r="3.7" fill="none" stroke="#fff" stroke-width="3"/><path fill="#fff" d="M16,0.3 Q23,0.3 23,5 Q23,9.7 16.3,9.7 Q18.3,7.5 18.3,5 Q18.3,2.5 16,0.3Z"/><path fill="none" stroke="#fff" stroke-width="2.9" d="M1.5,18.3 V16.5 Q1.5,12 10.6,12 Q19.7,12 19.7,16.5 V18.3Z"/><path fill="#fff" d="M19.5,11.2 Q28,12.2 28,16.8 V19.6 H22.6 V16.5 Q22.6,13.2 19.5,11.2Z"/></svg>
<div class="abs" style="left:1698px;top:997px;width:24px;height:24px;border-radius:50%;background:#5f6368;font-weight:bold;font-size:13.5px;line-height:24px;text-align:center;letter-spacing:-0.3px">27</div>
<svg class="ricon" viewBox="0 0 26 25" style="left:1742px;top:1018px;width:26px;height:25px"><path fill="none" stroke="#fff" stroke-width="3" stroke-linejoin="round" d="M1.5,23 V2.5 Q1.5,1.5 2.5,1.5 H23.5 Q24.5,1.5 24.5,2.5 V17.5 Q24.5,18.5 23.5,18.5 H6 L1.5,23Z"/><rect x="4.6" y="5.2" width="15.8" height="2.8" fill="#fff"/><rect x="4.6" y="9.2" width="15.8" height="2.5" fill="#fff"/><rect x="4.6" y="12.8" width="10.8" height="2.3" fill="#fff"/></svg>
<svg class="ricon" viewBox="0 0 24 24" style="left:1797px;top:1015.5px;width:30px;height:30px"><path fill="#fff" d="M12 2l-5.5 9h11L12 2zm0 3.84L13.93 9h-3.87L12 5.84zM17.5 13c-2.49 0-4.5 2.01-4.5 4.5s2.01 4.5 4.5 4.5 4.5-2.01 4.5-4.5-2.01-4.5-4.5-4.5zm0 7c-1.38 0-2.5-1.12-2.5-2.5s1.12-2.5 2.5-2.5 2.5 1.12 2.5 2.5-1.12 2.5-2.5 2.5zM3 21.5h8v-8H3v8zm2-6h4v4H5v-4z"/></svg>
<svg class="ricon" viewBox="0 0 23 28" style="left:1858px;top:1017.5px;width:23px;height:28px"><path fill="none" stroke="#fff" stroke-width="2.3" d="M11.5,1.3 L21.3,5.2 V12.5 Q21.3,22.5 11.5,26.6 Q1.7,22.5 1.7,12.5 V5.2Z"/><rect x="6.6" y="12.2" width="9.4" height="7.8" rx="0.8" fill="#fff"/><path fill="none" stroke="#fff" stroke-width="1.7" d="M8.8,12.6 V10.4 Q8.8,7.6 11.3,7.6 Q13.8,7.6 13.8,10.4 V12.6"/><circle cx="11.3" cy="16" r="1.1" fill="#202124"/></svg>
</body></html>
